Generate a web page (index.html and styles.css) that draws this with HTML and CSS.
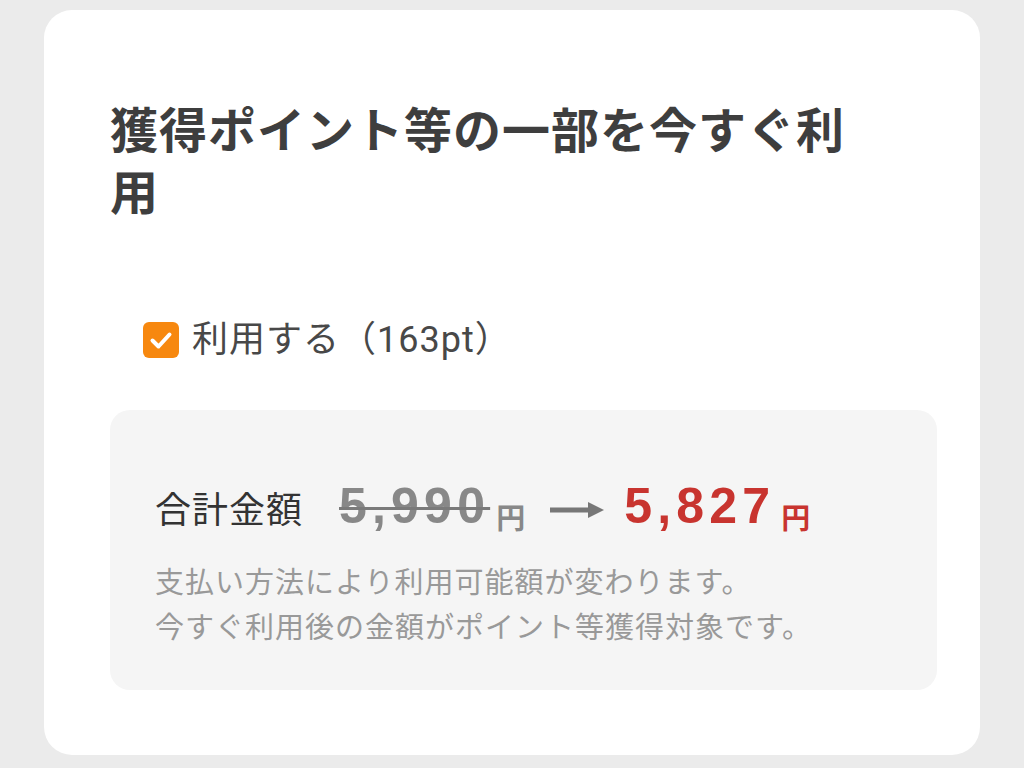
FILE: index.html
```html
<!DOCTYPE html>
<html lang="ja">
<head>
<meta charset="utf-8">
<title>獲得ポイント等の一部を今すぐ利用</title>
<link rel="stylesheet" href="styles.css">
</head>
<body>
<div class="card">
  <h1 class="title">獲得ポイント等の一部を今すぐ利用</h1>
  <label class="check-row">
    <span class="checkbox">
      <svg viewBox="0 0 36 36" width="36" height="36" aria-hidden="true">
        <path d="M9.5 18.5 L15.5 24.5 L26.5 12.5" fill="none" stroke="#fff" stroke-width="4" stroke-linecap="round" stroke-linejoin="round"/>
      </svg>
    </span>
    <span class="check-label">利用する（163pt）</span>
  </label>
  <div class="panel">
    <div class="price-row">
      <span class="total-label">合計金額</span><span class="old-price">5,990</span><span class="yen yen-old">円</span><svg class="arrow" viewBox="0 0 54 16" width="54" height="16" aria-hidden="true"><rect x="0" y="5.5" width="42" height="5" fill="#777"/><path d="M38 0 L54 8 L38 16 Z" fill="#777"/></svg><span class="new-price">5,827</span><span class="yen yen-new">円</span>
    </div>
    <p class="note">支払い方法により利用可能額が変わります。<br>今すぐ利用後の金額がポイント等獲得対象です。</p>
  </div>
</div>
</body>
</html>
```

FILE: styles.css
```css
html, body {
  margin: 0;
  padding: 0;
}
body {
  background: #ebebeb;
  padding: 10px 44px;
  width: 1024px;
  height: 768px;
  box-sizing: border-box;
  font-family: Roboto, "Noto Sans CJK JP", sans-serif;
}
.card {
  background: #fff;
  border-radius: 28px;
  width: 936px;
  height: 745px;
  box-sizing: border-box;
  padding: 86px 43px 0 66px;
}
.title {
  margin: 0;
  width: 760px;
  font-family: "Noto Sans CJK JP", sans-serif;
  font-weight: 700;
  font-size: 48px;
  line-height: 62px;
  letter-spacing: 1px;
  color: #3e3e3e;
}
.check-row {
  display: flex;
  align-items: center;
  gap: 13px;
  height: 50px;
  margin-top: 95px;
  padding-left: 33px;
}
.checkbox {
  width: 36px;
  height: 36px;
  border-radius: 6px;
  background: #f7880f;
  display: flex;
}
.check-label {
  font-size: 36px;
  line-height: 50px;
  letter-spacing: 1px;
  color: #484848;
}
.panel {
  margin-top: 45px;
  height: 280px;
  box-sizing: border-box;
  background: #f5f5f5;
  border-radius: 20px;
  padding: 66px 45px 0 45px;
}
.price-row {
  height: 60px;
  line-height: 60px;
  white-space: nowrap;
  font-family: "Liberation Sans", "Noto Sans CJK JP", sans-serif;
  font-size: 48px;
}
.total-label {
  font-family: "Noto Sans CJK JP", sans-serif;
  font-size: 36px;
  letter-spacing: 1px;
  color: #333;
  margin-right: 36px;
}
.old-price,
.new-price {
  font-weight: 700;
  font-size: 50px;
  letter-spacing: 5.2px;
}
.old-price {
  color: #888;
  text-decoration: line-through;
  text-decoration-thickness: 3px;
  text-decoration-color: #7a7a7a;
}
.new-price {
  color: #c8342f;
  margin-left: 20px;
}
.yen {
  font-family: "Noto Sans CJK JP", sans-serif;
  font-size: 29px;
  font-weight: 700;
  vertical-align: -6px;
  margin-left: 6px;
}
.yen-old {
  color: #888;
  margin-right: 25px;
}
.yen-new {
  color: #c8342f;
}
.arrow {
  vertical-align: 5px;
}
.note {
  margin: 22px 0 0 0;
  font-family: "Noto Sans CJK JP", sans-serif;
  font-size: 29px;
  line-height: 45px;
  letter-spacing: 1px;
  color: #999;
}
```
